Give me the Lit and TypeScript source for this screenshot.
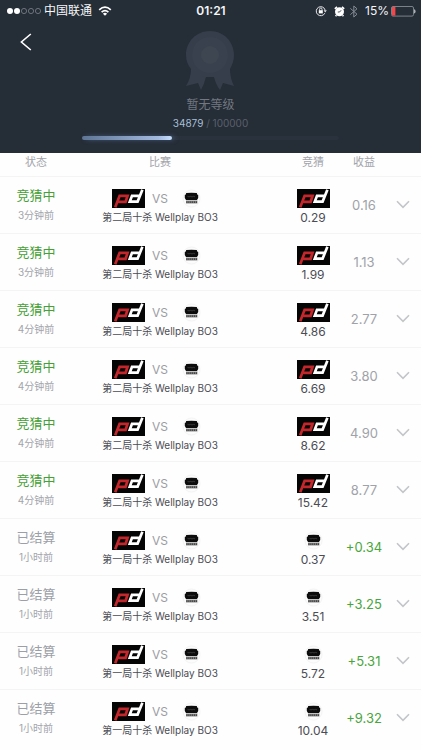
import { LitElement, html, svg, css } from "lit";
import { customElement, property } from "lit/decorators.js";

type Team = "pd" | "sofa";

interface Bet {
  settled: boolean;
  time: string;
  match: string;
  pick: Team;
  stake: string;
  profit: string;
}

const SECOND = "第二局十杀 Wellplay BO3";
const FIRST = "第一局十杀 Wellplay BO3";

const open = (time: string, stake: string, profit: string): Bet => ({
  settled: false, time, match: SECOND, pick: "pd", stake, profit,
});
const settled = (stake: string, profit: string): Bet => ({
  settled: true, time: "1小时前", match: FIRST, pick: "sofa", stake, profit,
});

const BETS: Bet[] = [
  open("3分钟前", "0.29", "0.16"),
  open("3分钟前", "1.99", "1.13"),
  open("4分钟前", "4.86", "2.77"),
  open("4分钟前", "6.69", "3.80"),
  open("4分钟前", "8.62", "4.90"),
  open("4分钟前", "15.42", "8.77"),
  settled("0.37", "+0.34"),
  settled("3.51", "+3.25"),
  settled("5.72", "+5.31"),
  settled("10.04", "+9.32"),
];

@customElement("team-logo")
export class TeamLogo extends LitElement {
  @property() team: Team = "pd";

  static styles = css`
    :host { display: flex; justify-content: center; width: 33px; height: 19px; }
    svg { display: block; }
  `;

  render() {
    if (this.team === "pd") {
      return html`<svg width="33" height="19" viewBox="0 0 33 19" role="img" aria-label="pd">
        <rect width="33" height="19" fill="#050505" />
        <path d="M3.2 18.2L7.6 6.8H15.6L13.6 12.8H6.4" fill="none" stroke="#c3272b" stroke-width="2.7" />
        <path d="M30.4 .8L25.6 12.6H17.8L20 6.8H27.6" fill="none" stroke="#fff" stroke-width="2.7" />
      </svg>`;
    }
    return html`<svg width="19" height="19" viewBox="0 0 19 19" role="img" aria-label="sofa">
      <circle cx="9.5" cy="9.5" r="8.5" fill="#fcfcfc" stroke="#f4f4f4" />
      <path fill="#0c0c0c" d="M4.2 4Q9.5 3.4 14.8 4L15.2 5.4L16.2 6V9L15 11H4L2.8 9V6L3.8 5.4Z" />
      <path d="M5.5 7.4l1.5.5 1.5-.5 1.5.5 1.5-.5 1.5.4" fill="none" stroke="#555" stroke-width=".6" />
      <path d="M4 13h11.4" stroke="#8a8a8a" stroke-width="3" />
      <path d="M4.4 13.2h11" stroke="#444" stroke-width="1.8" stroke-dasharray="1.1 .8" />
    </svg>`;
  }
}

@customElement("status-bar")
export class StatusBar extends LitElement {
  static styles = css`
    :host {
      display: grid; grid-template-columns: 1fr auto 1fr; align-items: center;
      height: 22px; padding: 0 5px 0 6px; color: #f4f6f8; font-size: 12px; line-height: 16px;
    }
    .side { display: flex; align-items: center; white-space: nowrap; }
    .right { justify-content: flex-end; }
    .carrier { margin: 0 6px 0 3px; }
    .time { font-weight: 600; }
    .lock { margin-right: 7px; }
    .alarm { margin-right: 4px; }
    .bt { margin-right: 6px; }
    .level { margin-right: 2px; }
    svg { display: block; flex: none; }
  `;

  render() {
    return html`
      <div class="side">
        <svg width="35" height="8" viewBox="0 0 35 8">
          ${[0, 1].map((i) => svg`<circle cx=${4 + i * 7} cy="4" r="3" fill="#fff" />`)}
          ${[2, 3, 4].map((i) => svg`<circle cx=${4 + i * 7} cy="4" r="2.6" fill="none" stroke="#7d838b" stroke-width=".8" />`)}
        </svg>
        <span class="carrier">中国联通</span>
        <svg width="14" height="10" viewBox="0 0 14 10" fill="none" stroke="#fff" stroke-width="1.7">
          <path d="M1.2 3.9Q7-1.5 12.8 3.9M3.6 6.2Q7 3.1 10.4 6.2" />
          <path d="M7 9.8L4.9 7.7Q7 6 9.1 7.7Z" fill="#fff" stroke="none" />
        </svg>
      </div>
      <span class="time">01:21</span>
      <div class="side right">
        <svg class="lock" width="12" height="12" viewBox="0 0 12 12">
          <path d="M9.8 8.2A4.5 4.5 0 1 1 10.1 5" fill="none" stroke="#e6e8ea" />
          <path d="M8.6 5.2h3.2L10.2 7.4Z" fill="#e6e8ea" />
          <rect x="3.8" y="5.2" width="4" height="3.2" fill="#fff" />
          <path d="M4.6 5.4V4.2a1.2 1.2 0 0 1 2.4 0V5.4" fill="none" stroke="#fff" stroke-width=".8" />
        </svg>
        <svg class="alarm" width="11" height="11" viewBox="0 0 11 11">
          <circle cx="5.5" cy="5.8" r="4.5" fill="#fff" />
          <path d="M.8 2.8L3 .9M10.2 2.8L8 .9M2.4 9.2L1.6 10.2M8.6 9.2L9.4 10.2" stroke="#fff" stroke-width="1.6" />
          <path d="M5.6 6L7.2 4.2M5.6 6H3.8" stroke="#252d37" stroke-width=".8" />
        </svg>
        <svg class="bt" width="10" height="13" viewBox="0 0 10 13">
          <path d="M1.4 3.4L8 9.2L4.8 12V1L8 3.8L1.4 9.6" fill="none" stroke="#858b93" />
        </svg>
        <span class="level">15%</span>
        <svg width="25" height="11" viewBox="0 0 25 11">
          <rect x=".5" y=".5" width="22" height="9.6" rx="1.5" fill="none" stroke="#7b8189" />
          <path d="M1 1h3.4v8.6H1Z" fill="#f2474b" />
          <path d="M23.6 3.6q1.2 1.8 0 3.6Z" fill="#d5d8db" stroke="#d5d8db" stroke-width=".6" />
        </svg>
      </div>
    `;
  }
}

@customElement("app-root")
export class AppRoot extends LitElement {
  private current = 34879;
  private goal = 100000;

  static styles = css`
    :host {
      display: block; min-height: 100vh; background: #fefefe; color: #4b4c54;
      font-family: Inter, "Noto Sans CJK SC", sans-serif;
    }
    .header { background: #252d37; padding-bottom: 13px; }
    .profile { display: grid; grid-template-columns: 1fr auto 1fr; align-items: start; padding-top: 8px; }
    .back {
      justify-self: start; width: 28px; height: 24px; margin-left: 12px; padding: 0;
      border: 0; background: none; display: grid; place-items: center; cursor: pointer;
    }
    .rank { display: flex; flex-direction: column; align-items: center; }
    .rank-name { margin-top: 5px; color: #727780; font-size: 12px; line-height: 18px; }
    .score { color: #5a606b; font-size: 10px; line-height: 18px; }
    .score-now { color: #a8bfd6; }
    .track { width: 61%; height: 4px; margin: 4px auto 0; border-radius: 2px; background: #2a323d; }
    .fill {
      height: 100%; border-radius: 2px;
      background: linear-gradient(90deg, #5f7596, #a3b9de 85%, #c9dfff);
      box-shadow: 3px 0 5px -1px #5e7faa;
    }
    .bets { width: 100%; table-layout: fixed; border-collapse: collapse; text-align: center; white-space: nowrap; }
    .col-status { width: 72px; }
    .col-stake { width: 60px; }
    .col-profit { width: 42px; }
    .col-more { width: 36px; }
    .bets th {
      height: 23px; padding: 0 0 4px; box-sizing: border-box; color: #a2a4ab;
      font-size: 11px; line-height: 16px; font-weight: 400;
    }
    .bets td { height: 57px; padding: 0; box-sizing: border-box; border-top: 1px solid #f4f4f5; }
    .bets .match { padding-right: 35px; }
    .bets td.info { padding-top: 12px; vertical-align: top; }
    .state { color: #45a036; font-size: 13px; line-height: 20px; }
    .time { color: #a2a4ab; font-size: 10px; line-height: 20px; }
    .settled .state { color: #9c9fa7; }
    .teams { display: flex; justify-content: center; align-items: center; gap: 7px; }
    .vs { width: 16px; display: flex; justify-content: center; color: #9b9da3; font-size: 12px; line-height: 19px; }
    .title { font-size: 10px; line-height: 18px; }
    .pick { display: flex; justify-content: center; }
    .stake { font-size: 12px; line-height: 20px; }
    .profit { color: #a0a2a9; font-size: 13px; }
    .profit span { display: flex; justify-content: center; }
    .settled .profit { color: #4aa53c; }
    .more { padding: 8px; border: 0; background: none; display: block; margin: 0 auto; cursor: pointer; }
    svg { display: block; }
  `;

  private row(bet: Bet) {
    return html`
      <tr class=${bet.settled ? "settled" : "open"}>
        <td>
          <div class="state">${bet.settled ? "已结算" : "竞猜中"}</div>
          <div class="time">${bet.time}</div>
        </td>
        <td class="match info">
          <div class="teams">
            <team-logo team="pd"></team-logo><span class="vs">VS</span><team-logo team="sofa"></team-logo>
          </div>
          <div class="title">${bet.match}</div>
        </td>
        <td class="info">
          <div class="pick"><team-logo team=${bet.pick}></team-logo></div>
          <div class="stake">${bet.stake}</div>
        </td>
        <td class="profit"><span>${bet.profit}</span></td>
        <td>
          <button class="more" aria-label="展开">
            <svg width="14" height="9" viewBox="0 0 14 9" fill="none" stroke="#c4c5c9" stroke-width="1.6">
              <path d="M1 1.2L7 7.4L13 1.2" />
            </svg>
          </button>
        </td>
      </tr>
    `;
  }

  render() {
    const percent = (this.current / this.goal) * 100;
    return html`
      <header class="header">
        <status-bar></status-bar>
        <div class="profile">
          <button class="back" aria-label="返回">
            <svg width="12" height="18" viewBox="0 0 12 18" fill="none" stroke="#fff" stroke-width="1.6">
              <path d="M10.8 1L1.4 9L10.8 17" />
            </svg>
          </button>
          <div class="rank">
            <svg width="50" height="61" viewBox="0 0 50 61">
              <path fill="#353e4a"
                d="M25 1C39 1 49 12 49 25C49 31 47 35 45 39Q45 48 49 56L38 53L35 60Q31 55 29 47H21Q19 55 16 60L13 53L1 56Q6 48 6 39C3 35 1 31 1 25C1 12 11 1 25 1Z" />
              <circle cx="25" cy="25" r="18" fill="#38414d" />
              <circle cx="25" cy="25" r="9" fill="#3d4651" />
            </svg>
            <div class="rank-name">暂无等级</div>
            <div class="score"><span class="score-now">${this.current}</span> / ${this.goal}</div>
          </div>
        </div>
        <div class="track" role="progressbar" aria-valuenow=${this.current} aria-valuemax=${this.goal}>
          <div class="fill" style="width:${percent}%"></div>
        </div>
      </header>
      <table class="bets">
        <colgroup>
          <col class="col-status" /><col /><col class="col-stake" /><col class="col-profit" /><col class="col-more" />
        </colgroup>
        <thead>
          <tr><th>状态</th><th class="match">比赛</th><th>竞猜</th><th>收益</th><th></th></tr>
        </thead>
        <tbody>${BETS.map((bet) => this.row(bet))}</tbody>
      </table>
    `;
  }
}
